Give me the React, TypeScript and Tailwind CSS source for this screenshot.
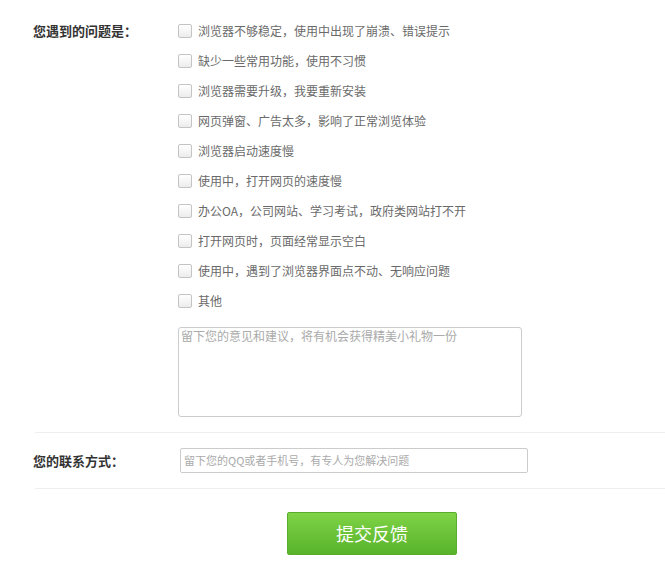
import React from "react";

const options = [
  "浏览器不够稳定，使用中出现了崩溃、错误提示",
  "缺少一些常用功能，使用不习惯",
  "浏览器需要升级，我要重新安装",
  "网页弹窗、广告太多，影响了正常浏览体验",
  "浏览器启动速度慢",
  "使用中，打开网页的速度慢",
  "办公OA，公司网站、学习考试，政府类网站打不开",
  "打开网页时，页面经常显示空白",
  "使用中，遇到了浏览器界面点不动、无响应问题",
  "其他",
];

export default function App() {
  return (
    <div
      className="w-[665px] h-[578px] bg-white overflow-hidden"
      style={{ fontFamily: '"Microsoft YaHei", "Noto Sans CJK SC", sans-serif' }}
    >
      <div className="flex pl-[33px] pt-[16px]">
        <div className="w-[145px] shrink-0 h-[30px] flex items-center text-[13px] font-bold text-[#333]">
          您遇到的问题是：
        </div>
        <div className="flex flex-col">
          {options.map((o) => (
            <label key={o} className="h-[30px] flex items-center">
              <span className="w-[14px] h-[14px] border border-[#c4c4c4] rounded-[2px] bg-gradient-to-b from-white to-[#ececec] shrink-0" />
              <span className="ml-[6px] text-[12px] text-[#6a6a6a] leading-none">{o}</span>
            </label>
          ))}
          <div className="mt-[11px] w-[344px] h-[90px] border border-[#ccc] rounded-[3px] px-[2px] pt-0 text-[12px] text-[#aaa] leading-[16px]">
            留下您的意见和建议，将有机会获得精美小礼物一份
          </div>
        </div>
      </div>
      <div className="mt-[15px] ml-[35px] border-t border-[#eeeeee]" />
      <div className="flex items-center pl-[33px] h-[55px]">
        <div className="w-[147px] shrink-0 text-[13px] font-bold text-[#333]">
          您的联系方式：
        </div>
        <div className="w-[348px] h-[25px] border border-[#ccc] rounded-[2px] flex items-center px-[3px] text-[11px] text-[#aaa]">
          留下您的QQ或者手机号，有专人为您解决问题
        </div>
      </div>
      <div className="ml-[35px] border-t border-[#eeeeee]" />
      <div className="pl-[287px] pt-[23px]">
        <button className="w-[170px] h-[43px] rounded-[2px] bg-gradient-to-b from-[#7fd346] to-[#58b32a] border border-[#5aac2c] text-white text-[18px] flex items-center justify-center">
          提交反馈
        </button>
      </div>
    </div>
  );
}
